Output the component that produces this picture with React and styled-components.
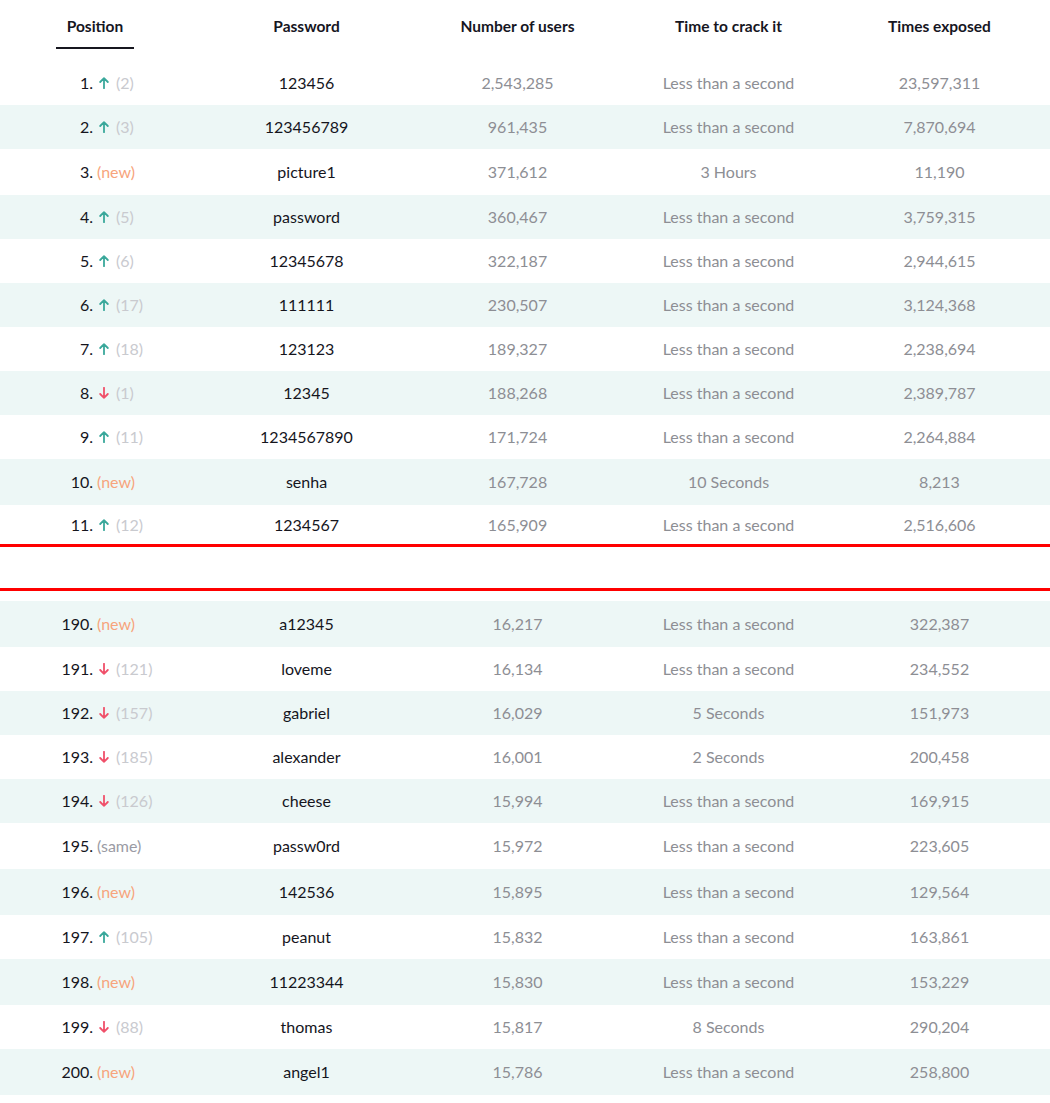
import styled, { createGlobalStyle } from "styled-components"

const teal = "#3aa89b"
const red = "#f0506a"
const orange = "#f7a47c"
const grey = "#8d8e94"
const stripe = "#edf7f6"

const Global = createGlobalStyle`
  body {
    margin: 0;
    background: #fff;
    font-family: Lato, "Open Sans", sans-serif;
    font-size: 16px;
  }
`

const LTAS = "Less than a second"

const top = [
  [1, "up", "2", "123456", "2,543,285", LTAS, "23,597,311"],
  [2, "up", "3", "123456789", "961,435", LTAS, "7,870,694"],
  [3, "new", "", "picture1", "371,612", "3 Hours", "11,190"],
  [4, "up", "5", "password", "360,467", LTAS, "3,759,315"],
  [5, "up", "6", "12345678", "322,187", LTAS, "2,944,615"],
  [6, "up", "17", "111111", "230,507", LTAS, "3,124,368"],
  [7, "up", "18", "123123", "189,327", LTAS, "2,238,694"],
  [8, "down", "1", "12345", "188,268", LTAS, "2,389,787"],
  [9, "up", "11", "1234567890", "171,724", LTAS, "2,264,884"],
  [10, "new", "", "senha", "167,728", "10 Seconds", "8,213"],
  [11, "up", "12", "1234567", "165,909", LTAS, "2,516,606"],
]

const bottom = [
  [190, "new", "", "a12345", "16,217", LTAS, "322,387"],
  [191, "down", "121", "loveme", "16,134", LTAS, "234,552"],
  [192, "down", "157", "gabriel", "16,029", "5 Seconds", "151,973"],
  [193, "down", "185", "alexander", "16,001", "2 Seconds", "200,458"],
  [194, "down", "126", "cheese", "15,994", LTAS, "169,915"],
  [195, "same", "", "passw0rd", "15,972", LTAS, "223,605"],
  [196, "new", "", "142536", "15,895", LTAS, "129,564"],
  [197, "up", "105", "peanut", "15,832", LTAS, "163,861"],
  [198, "new", "", "11223344", "15,830", LTAS, "153,229"],
  [199, "down", "88", "thomas", "15,817", "8 Seconds", "290,204"],
  [200, "new", "", "angel1", "15,786", LTAS, "258,800"],
]

const Table = styled.div`
  width: 100%;
`
const Grid = styled.div`
  display: grid;
  grid-template-columns: 201px repeat(4, 211px) 1fr;
`
const HeadRow = styled(Grid)`
  height: 61px;
  align-items: start;
  padding-top: 17px;
  box-sizing: border-box;
`
const HeadCell = styled.div`
  display: flex;
  justify-content: center;
  font-weight: 700;
  font-size: 15.5px;
  color: #16161f;
  line-height: 18px;
  padding-right: ${(p) => (p.first ? "11px" : "0")};
`
const Tab = styled.span`
  padding: 0 11px 12px;
  border-bottom: 2px solid #16161f;
`
const Row = styled(Grid)`
  height: ${(p) => p.h}px;
  align-items: center;
  background: ${(p) => (p.striped ? stripe : "#fff")};
`
const Cell = styled.div`
  text-align: center;
  color: ${(p) => (p.dark ? "#15151d" : grey)};
  line-height: 18px;
`
const PosCell = styled.div`
  display: grid;
  grid-template-columns: 1fr 1fr;
  column-gap: 4px;
  padding-right: 11px;
  align-items: center;
  line-height: 18px;
`
const Rank = styled.span`
  justify-self: end;
  color: #15151d;
`
const Change = styled.span`
  justify-self: start;
  display: flex;
  align-items: center;
  gap: 7px;
`
const Prev = styled.span`
  color: #c9cacf;
`
const Label = styled.span`
  color: ${(p) => (p.kind === "new" ? orange : "#9a9ba4")};
`
const Break = styled.div`
  height: 41px;
  border-top: 3px solid #ff0000;
  border-bottom: 3px solid #ff0000;
  margin-bottom: 10px;
  background: #fff;
`

const Arrow = ({ dir }) => (
  <svg width="10" height="12" viewBox="0 0 10 12" style={{ marginLeft: 2 }}>
    <g
      fill="none"
      stroke={dir === "up" ? teal : red}
      strokeWidth="1.8"
      strokeLinecap="round"
      strokeLinejoin="round"
      transform={dir === "up" ? undefined : "rotate(180 5 6)"}
    >
      <path d="M5 11.2V1.2M1.2 5L5 1.2L8.8 5" />
    </g>
  </svg>
)

const Entry = ({ d, h }) => {
  const [pos, kind, prev, pw, users, time, exposed] = d
  const label = kind === "new" || kind === "same"
  return (
    <Row striped={pos % 2 === 0} h={h || (label ? 46 : 44)}>
      <PosCell>
        <Rank>{pos}.</Rank>
        {label ? (
          <Label kind={kind}>({kind})</Label>
        ) : (
          <Change>
            <Arrow dir={kind} />
            <Prev>({prev})</Prev>
          </Change>
        )}
      </PosCell>
      <Cell dark>{pw}</Cell>
      <Cell>{users}</Cell>
      <Cell>{time}</Cell>
      <Cell>{exposed}</Cell>
    </Row>
  )
}

const App = () => {
  return (
    <Table>
      <Global />
      <HeadRow>
        <HeadCell first>
          <Tab>Position</Tab>
        </HeadCell>
        <HeadCell>Password</HeadCell>
        <HeadCell>Number of users</HeadCell>
        <HeadCell>Time to crack it</HeadCell>
        <HeadCell>Times exposed</HeadCell>
      </HeadRow>
      {top.map((d, i) => (
        <Entry key={d[0]} d={d} h={i === top.length - 1 ? 39 : undefined} />
      ))}
      <Break />
      {bottom.map((d) => (
        <Entry key={d[0]} d={d} />
      ))}
    </Table>
  )
}

export default App
